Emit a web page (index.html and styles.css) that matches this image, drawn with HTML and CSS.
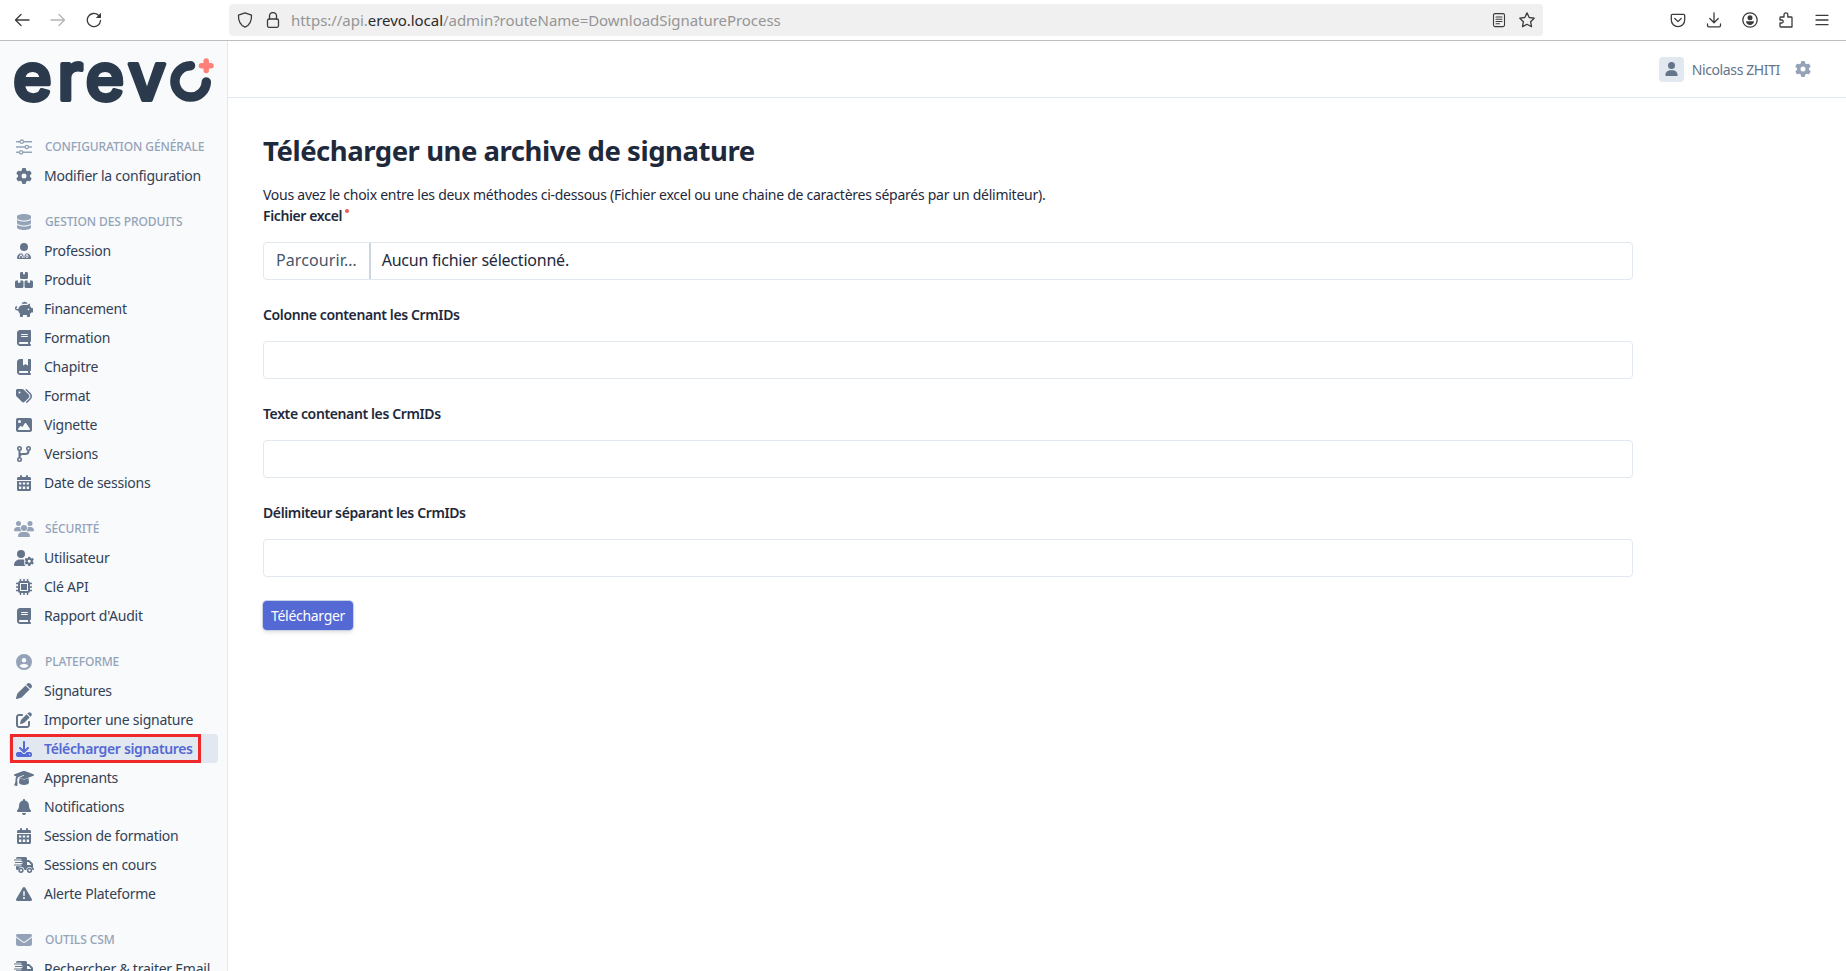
FILE: index.html
```html
<!DOCTYPE html>
<html lang="fr">
<head>
    <meta charset="UTF-8">
    <meta name="viewport" content="width=device-width, initial-scale=1.0">
    <title>Télécharger une archive de signature</title>
    <link rel="stylesheet" href="styles.css">
</head>
<body>
    <!-- icon sprite -->
    <svg class="sprite" aria-hidden="true">
        <symbol id="gear" viewBox="0 0 512 512"><path d="M495.9 166.6c3.2 8.7 .5 18.4-6.4 24.6l-43.3 39.4c1.1 8.3 1.7 16.8 1.7 25.4s-.6 17.1-1.7 25.4l43.3 39.4c6.9 6.2 9.6 15.9 6.4 24.6c-4.4 11.9-9.7 23.3-15.8 34.3l-4.7 8.1c-6.6 11-14 21.4-22.1 31.2c-5.9 7.2-15.7 9.6-24.5 6.8l-55.7-17.7c-13.4 10.3-28.2 18.9-44 25.4l-12.5 57.1c-2 9.1-9 16.3-18.2 17.8c-13.8 2.3-28 3.5-42.5 3.5s-28.7-1.2-42.5-3.5c-9.2-1.5-16.2-8.7-18.2-17.8l-12.5-57.1c-15.8-6.5-30.6-15.1-44-25.4L83.1 425.9c-8.8 2.8-18.6 .3-24.5-6.8c-8.1-9.8-15.5-20.2-22.1-31.2l-4.7-8.1c-6.1-11-11.4-22.4-15.8-34.3c-3.2-8.7-.5-18.4 6.4-24.6l43.3-39.4C64.6 273.1 64 264.6 64 256s.6-17.1 1.7-25.4L22.4 191.2c-6.9-6.2-9.6-15.9-6.4-24.6c4.4-11.9 9.7-23.3 15.8-34.3l4.7-8.1c6.6-11 14-21.4 22.1-31.2c5.9-7.2 15.7-9.6 24.5-6.8l55.7 17.7c13.4-10.3 28.2-18.9 44-25.4l12.5-57.1c2-9.1 9-16.3 18.2-17.8C227.3 1.2 241.5 0 256 0s28.7 1.2 42.5 3.5c9.2 1.5 16.2 8.7 18.2 17.8l12.5 57.1c15.8 6.5 30.6 15.1 44 25.4l55.7-17.7c8.8-2.8 18.6-.3 24.5 6.8c8.1 9.8 15.5 20.2 22.1 31.2l4.7 8.1c6.1 11 11.4 22.4 15.8 34.3zM256 336a80 80 0 1 0 0-160 80 80 0 1 0 0 160z"/></symbol>
        <symbol id="sliders" viewBox="0 0 16 16"><path d="M.5 2.7h3.2M7.8 2.7h7.7M.5 8h8.2M12.8 8h2.7M.5 13.3h2.7M7.3 13.3h8.2" fill="none" stroke="currentColor" stroke-width="1.5" stroke-linecap="round"/><g fill="none" stroke="currentColor" stroke-width="1.3"><circle cx="5.8" cy="2.7" r="1.7"/><circle cx="10.8" cy="8" r="1.7"/><circle cx="5.2" cy="13.3" r="1.7"/></g></symbol>
        <symbol id="database" viewBox="0 0 448 512"><path d="M448 80v48c0 44.2-100.3 80-224 80S0 172.2 0 128V80C0 35.8 100.3 0 224 0S448 35.8 448 80zM393.2 214.7c20.8-7.4 39.9-16.9 54.8-28.6V288c0 44.2-100.3 80-224 80S0 332.2 0 288V186.1c14.9 11.8 34 21.2 54.8 28.6C99.7 230.7 159.5 240 224 240s124.3-9.3 169.2-25.3zM0 346.1c14.9 11.8 34 21.2 54.8 28.6C99.7 390.7 159.5 400 224 400s124.3-9.3 169.2-25.3c20.8-7.4 39.9-16.9 54.8-28.6V432c0 44.2-100.3 80-224 80S0 476.2 0 432V346.1z"/></symbol>
        <symbol id="user" viewBox="0 0 448 512"><path d="M224 256A128 128 0 1 0 224 0a128 128 0 1 0 0 256zm-45.7 48C79.8 304 0 383.8 0 482.3C0 498.7 13.3 512 29.7 512H418.3c16.4 0 29.7-13.3 29.7-29.7C448 383.8 368.2 304 269.7 304H178.3z"/></symbol>
        <symbol id="doctor" viewBox="0 0 14 16"><circle cx="7" cy="4" r="4"/><path d="M4.5 9.7C1.9 10.4 0 12.6 0 15.1c0 .5.4.9.9.9h12.2c.5 0 .9-.4.9-.9 0-2.5-1.9-4.7-4.5-5.4L7 13z"/><path d="M4 10v2.4M2.6 15v-1.2a1.4 1.4 0 0 1 2.8 0V15M10 10v2M7 10.5v4.5" fill="none" stroke="#f8fafc" stroke-width=".9"/><circle cx="10" cy="13.3" r="1.2" fill="none" stroke="#f8fafc" stroke-width=".9"/></symbol>
        <symbol id="boxes" viewBox="0 0 18 16"><path d="M6.5 0H8v2.5l1-.6 1 .6V0h1.5c.8 0 1.5.7 1.5 1.5v4c0 .8-.7 1.5-1.5 1.5h-5C5.7 7 5 6.3 5 5.5v-4C5 .7 5.7 0 6.5 0zM1.5 8.5H3V11l1.2-.6 1.2.6V8.5H7c.8 0 1.5.7 1.5 1.5v4.5c0 .8-.7 1.5-1.5 1.5H1.5C.7 16 0 15.3 0 14.5V10c0-.8.7-1.5 1.5-1.5zM11 8.5h1.6V11l1.2-.6 1.2.6V8.5h1.5c.8 0 1.5.7 1.5 1.5v4.5c0 .8-.7 1.5-1.5 1.5H11c-.8 0-1.5-.7-1.5-1.5V10c0-.8.7-1.5 1.5-1.5z"/></symbol>
        <symbol id="piggy" viewBox="0 0 18 16"><path d="M6.6 3.2A3 3 0 0 1 12.5 3.1C11 2.7 8.5 2.7 6.6 3.2zM3.3 8C3.7 5.5 6 4 8.5 4h4c.8-1 1.800-1.300 2.700-1.300l-.4 2.200c.8.6 1.300 1.300 1.600 2.100h.9c.4 0 .7.3.7.7v3.200c0 .4-.3.7-.7.7h-1.100c-.3.5-.7.9-1.200 1.300V15.200c0 .5-.3.8-.8.8h-1.500c-.5 0-.8-.3-.8-.8V14H8v1.200c0 .5-.3.8-.8.8H5.700c-.5 0-.8-.3-.8-.8v-2.600C4 11.800 3.400 10.800 3.200 9.500H2.500C1 9.500 0 8.500 0 7.200 0 6 .9 5.100 2.100 5.100v1.300c-.5 0-.8.3-.8.8 0 .5.5.8 1 .8zM13.500 9.200a.8.8 0 1 0 0-1.600.8.8 0 0 0 0 1.600z" fill-rule="evenodd"/></symbol>
        <symbol id="book" viewBox="0 0 448 512"><path d="M96 0C43 0 0 43 0 96V416c0 53 43 96 96 96H384h32c17.7 0 32-14.3 32-32s-14.3-32-32-32V384c17.7 0 32-14.3 32-32V32c0-17.7-14.3-32-32-32H384 96zm0 384H352v64H96c-17.7 0-32-14.3-32-32s14.3-32 32-32zm32-240c0-8.8 7.2-16 16-16H336c8.8 0 16 7.2 16 16s-7.2 16-16 16H144c-8.8 0-16-7.2-16-16zm16 48H336c8.8 0 16 7.2 16 16s-7.2 16-16 16H144c-8.8 0-16-7.2-16-16s7.2-16 16-16z"/></symbol>
        <symbol id="bookmark" viewBox="0 0 448 512"><path d="M0 96C0 43 43 0 96 0h96V190.7c0 13.4 15.5 20.9 26 12.5L272 160l54 43.2c10.5 8.4 26 .9 26-12.5V0h32 32c17.7 0 32 14.3 32 32V352c0 17.7-14.3 32-32 32v64c17.7 0 32 14.3 32 32s-14.3 32-32 32H384 96c-53 0-96-43-96-96V96zM64 416c0 17.7 14.3 32 32 32H352V384H96c-17.7 0-32 14.3-32 32z"/></symbol>
        <symbol id="tags" viewBox="0 0 512 512"><path d="M345 39.1L472.8 168.4c52.4 53 52.4 138.2 0 191.2L360.8 472.9c-9.3 9.4-24.5 9.5-33.9 .2s-9.5-24.5-.2-33.9L438.6 325.9c33.9-34.3 33.9-89.4 0-123.7L310.9 72.9c-9.3-9.4-9.2-24.6 .2-33.9s24.6-9.2 33.9 .2zM0 229.5V80C0 53.5 21.5 32 48 32H197.5c17 0 33.3 6.7 45.3 18.7l168 168c25 25 25 65.5 0 90.5L277.3 442.7c-25 25-65.5 25-90.5 0l-168-168C6.7 262.7 0 246.5 0 229.5zM144 144a32 32 0 1 0 -64 0 32 32 0 1 0 64 0z"/></symbol>
        <symbol id="image" viewBox="0 0 512 512"><path d="M0 96C0 60.7 28.7 32 64 32H448c35.3 0 64 28.7 64 64V416c0 35.3-28.7 64-64 64H64c-35.3 0-64-28.7-64-64V96zM323.8 202.5c-4.5-6.6-11.9-10.5-19.8-10.5s-15.4 3.9-19.8 10.5l-87 127.6L170.7 297c-4.6-5.7-11.5-9-18.7-9s-14.2 3.3-18.7 9l-64 80c-5.8 7.2-6.9 17.1-2.9 25.4s12.4 13.6 21.6 13.6h96 32H424c8.9 0 17.1-4.9 21.2-12.8s3.6-17.4-1.4-24.7l-120-176zM112 192a48 48 0 1 0 0-96 48 48 0 1 0 0 96z"/></symbol>
        <symbol id="branch" viewBox="0 0 14 16"><g fill="none" stroke="currentColor" stroke-width="1.6"><circle cx="2.5" cy="2.5" r="1.7"/><circle cx="11.5" cy="2.5" r="1.7"/><circle cx="2.5" cy="13.5" r="1.7"/></g><path d="M2.5 4.5v7M11.5 4.5V5a3 3 0 0 1-3 3h-3a3 3 0 0 0-3 3" fill="none" stroke="currentColor" stroke-width="2"/></symbol>
        <symbol id="calendar" viewBox="0 0 14 16"><path fill-rule="evenodd" d="M3 1a1 1 0 0 1 2 0v1h4V1a1 1 0 0 1 2 0v1h1.5c.8 0 1.5.7 1.5 1.5V5H0V3.5C0 2.7.7 2 1.5 2H3zM0 6h14v8.5c0 .8-.7 1.5-1.5 1.5h-11C.7 16 0 15.3 0 14.5zM2 7.5V9.500h2.300V7.500zM5.800 7.500V9.500h2.400V7.500zM9.700 7.500V9.500H12V7.500zM2 11.500v2.500h2.300v-2.500zM5.800 11.500v2.500h2.400v-2.500zM9.700 11.500v2.500H12v-2.500z"/></symbol>
        <symbol id="group" viewBox="0 0 20 16"><circle cx="4.5" cy="2.5" r="2.5"/><circle cx="16" cy="2.5" r="2.5"/><circle cx="10" cy="7" r="3"/><path d="M3.3 6h1.5c.5 0 1 .1 1.5.3-.2 1.5.3 3 1.4 3.9H.7c-.4 0-.7-.3-.7-.7C0 7.500 1.500 6 3.300 6zM15.200 6h1.500C18.500 6 20 7.500 20 9.500c0 .4-.3.7-.7.7h-7c1.100-.9 1.600-2.400 1.400-3.900.5-.2 1-.3 1.500-.3zM4 15.200C4 12.900 5.900 11 8.200 11h3.600c2.300 0 4.200 1.900 4.200 4.200 0 .5-.4.8-.8.8H4.800c-.4 0-.8-.3-.8-.8z"/></symbol>
        <symbol id="user-gear" viewBox="0 0 20 16"><circle cx="7" cy="4" r="4"/><path d="M5.6 9.5h2.8c.8 0 1.5.1 2.2.4-.8 1.2-.6 1.600-.2 2.300-.7 1.200.1 3 1.200 3.800H.9c-.5 0-.9-.4-.9-.9C0 12 2.500 9.500 5.600 9.500z"/><svg x="10.5" y="6.5" width="9.5" height="9.5"><use href="#gear"/></svg></symbol>
        <symbol id="chip" viewBox="0 0 16 16"><path d="M4.5 0v16M8 0v16M11.5 0v16M0 4.5h16M0 8h16M0 11.5h16" stroke="currentColor" stroke-width="1.5"/><rect x="2" y="2" width="12" height="12" rx="2"/><rect x="4.5" y="4.5" width="7" height="7" fill="none" stroke="#f8fafc"/></symbol>
        <symbol id="circle-user" viewBox="0 0 512 512"><path d="M399 384.2C376.9 345.8 335.4 320 288 320H224c-47.4 0-88.9 25.8-111 64.2c35.2 39.2 86.2 63.8 143 63.8s107.8-24.7 143-63.8zM0 256a256 256 0 1 1 512 0A256 256 0 1 1 0 256zm256 16a72 72 0 1 0 0-144 72 72 0 1 0 0 144z"/></symbol>
        <symbol id="pen" viewBox="0 0 512 512"><path d="M362.7 19.3L328 54 458 184l34.7-34.7c25-25 25-65.5 0-90.5L453.3 19.3c-25-25-65.5-25-90.5 0zM305 77L58.6 323.5c-10.4 10.4-18 23.3-22.2 37.4L1 481.2C-1.5 489.7 .8 498.8 7 505s15.3 8.5 23.7 6.1l120.3-35.4c14.1-4.2 27-11.8 37.4-22.2L435 207z"/></symbol>
        <symbol id="edit" viewBox="0 0 512 512"><path d="M471.6 21.7c-21.9-21.9-57.3-21.9-79.2 0L362.3 51.7l97.9 97.9 30.1-30.1c21.9-21.9 21.9-57.3 0-79.2L471.6 21.7zm-299.2 220c-6.1 6.1-10.8 13.6-13.5 21.9l-29.6 88.8c-2.9 8.6-.6 18.1 5.8 24.6s15.9 8.7 24.6 5.8l88.8-29.6c8.2-2.7 15.7-7.4 21.9-13.5L437.7 172.3 339.7 74.3 172.4 241.7zM96 64C43 64 0 107 0 160V416c0 53 43 96 96 96H352c53 0 96-43 96-96V320c0-17.7-14.3-32-32-32s-32 14.3-32 32v96c0 17.7-14.3 32-32 32H96c-17.7 0-32-14.3-32-32V160c0-17.7 14.3-32 32-32h96c17.7 0 32-14.3 32-32s-14.3-32-32-32H96z"/></symbol>
        <symbol id="download" viewBox="0 0 512 512"><path d="M288 32c0-17.7-14.3-32-32-32s-32 14.3-32 32V274.7l-73.4-73.4c-12.5-12.5-32.8-12.5-45.3 0s-12.5 32.8 0 45.3l128 128c12.5 12.5 32.8 12.5 45.3 0l128-128c12.5-12.5 12.5-32.8 0-45.3s-32.8-12.5-45.3 0L288 274.7V32zM64 352c-35.3 0-64 28.7-64 64v32c0 35.3 28.7 64 64 64H448c35.3 0 64-28.7 64-64V416c0-35.3-28.7-64-64-64H346.5l-45.3 45.3c-25 25-65.5 25-90.5 0L165.5 352H64zm368 56a24 24 0 1 1 0 48 24 24 0 1 1 0-48z"/></symbol>
        <symbol id="graduate" viewBox="0 0 20 16"><path d="M10 1c-.3 0-.5 0-.8.1L.5 4.3C.2 4.400 0 4.700 0 5s.2.6.5.7l1.900.7C1.800 7.300 1.500 8.400 1.500 9.500v1c0 1.500-.5 3-1.200 4.200-.2.3 0 .8.4.9l2 .4c.3.1.5-.1.6-.4.4-2 .2-3.800-.1-5.100C3.200 9 3.700 7.800 4.600 7l5-2 .3.7-4.500 1.900 3.800 1.400c.5.2 1.100.2 1.600 0l8.700-3.300c.3-.1.5-.4.5-.7s-.2-.6-.5-.7l-8.700-3.200C10.500 1 10.300 1 10 1zM5 12.500C5 13.900 7.200 15 10 15s5-1.100 5-2.500l-.5-4.500-3.400 1.200c-.7.3-1.500.3-2.200 0L5.500 8z"/></symbol>
        <symbol id="bell" viewBox="0 0 448 512"><path d="M224 0c-17.7 0-32 14.3-32 32V51.2C119 66 64 130.6 64 208v18.8c0 47-17.3 92.4-48.5 127.6l-7.4 8.3c-8.4 9.4-10.4 22.9-5.3 34.4S19.4 416 32 416H416c12.6 0 24-7.4 29.2-18.9s3.1-25-5.3-34.4l-7.4-8.3C401.3 319.2 384 273.9 384 226.8V208c0-77.4-55-142-128-156.8V32c0-17.7-14.3-32-32-32zm45.3 493.3c12-12 18.7-28.3 18.7-45.3H224 160c0 17 6.7 33.3 18.7 45.3s28.3 18.7 45.3 18.7s33.3-6.7 45.3-18.7z"/></symbol>
        <symbol id="truck" viewBox="0 0 20 16"><path fill-rule="evenodd" d="M3.5 0H11.5C12.3 0 13 .7 13 1.5V3h1.600c.4 0 .8.2 1.100.4l2.900 2.900c.3.3.4.7.4 1.100V11c.6 0 1 .4 1 1s-.4 1-1 1h-.6c0-1.700-1.300-3-3-3s-3 1.300-3 3h-2c0-1.700-1.300-3-3-3s-3 1.300-3 3H3.500C2.700 13 2 12.300 2 11.500V1.500C2 .7 2.700 0 3.500 0zM13 5v3h4v-.6L14.600 5z"/><path d="M0 3h7.500M1 5.500h7.500M0 8h7.500" stroke="#f8fafc" stroke-width="2.600"/><path d="M0 3h8M1 5.500h7.500M0 8h8" stroke="currentColor" stroke-width="1.100"/><g fill="none" stroke="currentColor" stroke-width="1.5"><circle cx="7" cy="13.3" r="1.9"/><circle cx="15.5" cy="13.3" r="1.9"/></g></symbol>
        <symbol id="alert" viewBox="0 0 512 512"><path d="M256 32c14.2 0 27.3 7.5 34.5 19.8l216 368c7.3 12.4 7.3 27.7 .2 40.1S486.3 480 472 480H40c-14.3 0-27.6-7.7-34.7-20.1s-7-27.8 .2-40.1l216-368C228.7 39.5 241.8 32 256 32zm0 128c-13.3 0-24 10.7-24 24V296c0 13.3 10.7 24 24 24s24-10.7 24-24V184c0-13.3-10.7-24-24-24zm32 224a32 32 0 1 0 -64 0 32 32 0 1 0 64 0z"/></symbol>
        <symbol id="envelope" viewBox="0 0 512 512"><path d="M48 64C21.5 64 0 85.5 0 112c0 15.1 7.1 29.3 19.2 38.4L236.8 313.6c11.4 8.5 27 8.5 38.4 0L492.8 150.4c12.1-9.1 19.2-23.3 19.2-38.4c0-26.5-21.5-48-48-48H48zM0 176V384c0 35.3 28.7 64 64 64H448c35.3 0 64-28.7 64-64V176L294.4 339.2c-22.8 17.1-54 17.1-76.8 0L0 176z"/></symbol>
    </svg>

    <div class="browser-bar">
        <div class="nav-buttons">
            <svg width="16" height="16" viewBox="0 0 16 16"><path d="M15 8H1.5M7 2.5L1.5 8 7 13.5"/></svg>
            <svg class="disabled" width="16" height="16" viewBox="0 0 16 16"><path d="M1 8h13.5M9 2.5L14.5 8 9 13.5"/></svg>
            <svg width="16" height="16" viewBox="0 0 16 16"><path d="M14.5 8.5A6.6 6.6 0 1 1 12.5 3.3"/><path class="solid" d="M15 .8V6H9.8z"/></svg>
        </div>
        <div class="url-bar">
            <svg width="16" height="16" viewBox="0 0 16 16"><path d="M8 .8l6.5 2.3c.3 5-1.5 9.8-6.5 12.1C3 12.9 1.2 8.1 1.5 3.1z"/></svg>
            <svg class="lock" width="16" height="16" viewBox="0 0 16 16"><rect x="2.5" y="7" width="11" height="8.3" rx="1.5"/><path d="M4.5 7V4a3.5 3.5 0 0 1 7 0v3"/></svg>
            <span class="url">https://api.<b>erevo.local</b>/admin?routeName=DownloadSignatureProcess</span>
            <svg class="reader" width="16" height="16" viewBox="0 0 16 16"><rect x="2.5" y="1.6" width="11" height="13" rx="1.5"/><path d="M5 5h6M5 7.3h6M5 9.5h6M5 11.7h3.5"/></svg>
            <svg width="16" height="16" viewBox="0 0 16 16"><path d="M8 .9l2.2 4.6 5 .7-3.6 3.5.9 5L8 12.3l-4.5 2.4.9-5L.8 6.2l5-.7z"/></svg>
        </div>
        <div class="tool-buttons">
            <svg width="16" height="16" viewBox="0 0 16 16"><path d="M2.5 2.3h11c.7 0 1.2.5 1.2 1.2V8a6.7 6.7 0 0 1-13.4 0V3.5c0-.7.5-1.2 1.2-1.2zM4.8 6.5L8 9.6l3.2-3.1"/></svg>
            <svg width="16" height="16" viewBox="0 0 16 16"><path d="M8 .8V10.5M3.8 6.5L8 10.7l4.2-4.2M1.5 12v1.5c0 .8.6 1.4 1.4 1.4h10.2c.8 0 1.4-.6 1.4-1.4V12"/></svg>
            <svg width="16" height="16" viewBox="0 0 16 16"><circle cx="8" cy="8" r="7.2"/><circle class="solid" cx="8" cy="5.7" r="2.5"/><path class="solid" d="M4 9.2h8c0 2-1.7 3.7-4 3.7s-4-1.7-4-3.7z"/></svg>
            <svg width="16" height="16" viewBox="0 0 16 16"><path d="M6 5V2.8a1.9 1.9 0 0 1 3.8 0V5h3.4c.5 0 .8.3.8.8V15H2.8c-.5 0-.8-.3-.8-.8V11h1.7a1.5 1.5 0 0 0 0-3H2V5.8c0-.5.3-.8.8-.8z"/></svg>
            <svg width="16" height="16" viewBox="0 0 16 16"><path d="M2 3.3h12M2 8h12M2 12.7h12"/></svg>
        </div>
    </div>

    <div class="wrapper">
        <aside class="sidebar">
            <svg class="logo" width="204" height="56" viewBox="0 0 204 56" role="img" aria-label="erevo">
                <text class="logo-text" y="47.5" x="1 45.5 73.5 116">erev</text>
                <path class="logo-ring" d="M178.5 13.7A15.7 15.7 0 1 0 194.3 30"/>
                <path class="logo-plus" d="M194.2 9v9.500M189.500 13.700h9.500"/>
            </svg>
            <ul class="menu">
                <li class="menu-header"><svg class="icon" width="16"><use href="#sliders"/></svg><span>CONFIGURATION GÉNÉRALE</span></li>
                <li><svg class="icon" width="16"><use href="#gear"/></svg><span>Modifier la configuration</span></li>

                <li class="menu-header"><svg class="icon" width="14"><use href="#database"/></svg><span>GESTION DES PRODUITS</span></li>
                <li><svg class="icon" width="14"><use href="#doctor"/></svg><span>Profession</span></li>
                <li><svg class="icon" width="18"><use href="#boxes"/></svg><span>Produit</span></li>
                <li><svg class="icon" width="18"><use href="#piggy"/></svg><span>Financement</span></li>
                <li><svg class="icon" width="14"><use href="#book"/></svg><span>Formation</span></li>
                <li><svg class="icon" width="14"><use href="#bookmark"/></svg><span>Chapitre</span></li>
                <li><svg class="icon" width="16"><use href="#tags"/></svg><span>Format</span></li>
                <li><svg class="icon" width="16"><use href="#image"/></svg><span>Vignette</span></li>
                <li><svg class="icon" width="14"><use href="#branch"/></svg><span>Versions</span></li>
                <li><svg class="icon" width="14"><use href="#calendar"/></svg><span>Date de sessions</span></li>

                <li class="menu-header"><svg class="icon" width="20"><use href="#group"/></svg><span>SÉCURITÉ</span></li>
                <li><svg class="icon" width="20"><use href="#user-gear"/></svg><span>Utilisateur</span></li>
                <li><svg class="icon" width="16"><use href="#chip"/></svg><span>Clé API</span></li>
                <li><svg class="icon" width="14"><use href="#book"/></svg><span>Rapport d'Audit</span></li>

                <li class="menu-header"><svg class="icon" width="16"><use href="#circle-user"/></svg><span>PLATEFORME</span></li>
                <li><svg class="icon" width="16"><use href="#pen"/></svg><span>Signatures</span></li>
                <li><svg class="icon" width="16"><use href="#edit"/></svg><span>Importer une signature</span></li>
                <li class="active"><svg class="icon" width="16"><use href="#download"/></svg><span>Télécharger signatures</span></li>
                <li><svg class="icon" width="20"><use href="#graduate"/></svg><span>Apprenants</span></li>
                <li><svg class="icon" width="14"><use href="#bell"/></svg><span>Notifications</span></li>
                <li><svg class="icon" width="14"><use href="#calendar"/></svg><span>Session de formation</span></li>
                <li><svg class="icon" width="20"><use href="#truck"/></svg><span>Sessions en cours</span></li>
                <li><svg class="icon" width="16"><use href="#alert"/></svg><span>Alerte Plateforme</span></li>

                <li class="menu-header"><svg class="icon" width="16"><use href="#envelope"/></svg><span>OUTILS CSM</span></li>
                <li><svg class="icon" width="20"><use href="#truck"/></svg><span>Rechercher &amp; traiter Email</span></li>
            </ul>
        </aside>

        <div class="content">
            <header class="topbar">
                <span class="avatar"><svg width="13" height="14"><use href="#user"/></svg></span>
                <span class="username">Nicolass ZHITI</span>
                <svg class="settings" width="16" height="16"><use href="#gear"/></svg>
            </header>

            <main>
                <h1>Télécharger une archive de signature</h1>
                <p class="intro">Vous avez le choix entre les deux méthodes ci-dessous (Fichier excel ou une chaine de caractères séparés par un délimiteur).</p>
                <form>
                    <div class="form-group">
                        <label class="required">Fichier excel</label>
                        <div class="file-input">
                            <span class="file-button">Parcourir…</span>
                            <span class="file-name">Aucun fichier sélectionné.</span>
                        </div>
                    </div>
                    <div class="form-group">
                        <label for="column">Colonne contenant les CrmIDs</label>
                        <input type="text" id="column">
                    </div>
                    <div class="form-group">
                        <label for="text">Texte contenant les CrmIDs</label>
                        <input type="text" id="text">
                    </div>
                    <div class="form-group">
                        <label for="delimiter">Délimiteur séparant les CrmIDs</label>
                        <input type="text" id="delimiter">
                    </div>
                    <button type="button" class="btn">Télécharger</button>
                </form>
            </main>
        </div>
    </div>
</body>
</html>
```
FILE: styles.css
```css
* { box-sizing: border-box; margin: 0; padding: 0; }
body { height: 971px; overflow: hidden; display: flex; flex-direction: column; font-family: "Noto Sans", sans-serif; font-size: 14px; color: #1e293b; background: #fff; }
.sprite { display: none; }

/* Browser toolbar */
.browser-bar { height: 41px; flex: none; display: flex; align-items: center; border-bottom: 1px solid #bebebe; }
.browser-bar svg { flex: none; fill: none; stroke: #3b3b3b; stroke-width: 1.3; stroke-linecap: round; stroke-linejoin: round; }
.browser-bar .solid { fill: #3b3b3b; stroke: none; }
.browser-bar .disabled { stroke: #b5b5b5; }
.nav-buttons { width: 229px; display: flex; gap: 20px; padding-left: 14px; }
.url-bar { width: 1314px; height: 32px; display: flex; align-items: center; padding: 0 8px; border-radius: 4px; background: #f0f0f0; }
.lock { margin-left: 12px; }
.url { flex: 1; margin-left: 10px; font-size: 15px; letter-spacing: -0.04px; color: #959595; white-space: nowrap; }
.url b { font-weight: 400; color: #2b2b2b; }
.url-bar .reader { margin-right: 12px; stroke-width: 1.1; }
.tool-buttons { display: flex; gap: 20px; margin-left: 127px; }

.wrapper { flex: 1; min-height: 0; display: flex; }

/* Sidebar */
.sidebar { width: 228px; flex: none; padding: 11px 9px 0; overflow: hidden; background: #f8fafc; border-right: 1px solid #e2e8f0; }
.logo { display: block; margin-left: 3px; overflow: visible; }
.logo-text { font-family: Inter, sans-serif; font-size: 66px; font-weight: 500; fill: #2b3a4c; stroke: #2b3a4c; stroke-width: 4px; stroke-linejoin: round; }
.logo-ring { fill: none; stroke: #2b3a4c; stroke-width: 9.5; stroke-linecap: round; }
.logo-plus { fill: none; stroke: #ff8078; stroke-width: 5.5; stroke-linecap: round; }
.menu { list-style: none; margin-top: 24px; }
.menu li { height: 29px; display: flex; align-items: center; border-radius: 4px; color: #334155; letter-spacing: -0.24px; white-space: nowrap; }
.menu .icon { height: 16px; flex: none; color: #64748b; fill: currentColor; }
.icon[width="14"] { margin: 0 13px 0 8px; }
.icon[width="16"] { margin: 0 12px 0 7px; }
.icon[width="18"] { margin: 0 11px 0 6px; }
.icon[width="20"] { margin: 0 10px 0 5px; }
.menu .menu-header { margin-top: 17px; font-size: 12px; font-weight: 500; letter-spacing: -0.1px; color: #94a3b8; }
.menu .menu-header:first-child { margin-top: 0; }
.menu-header span { padding-left: 1px; }
.menu .menu-header .icon { margin-top: 1px; color: #94a3b8; }
.menu .active { position: relative; background: #e2e8f0; color: #5469d4; font-weight: 600; letter-spacing: -0.35px; }
.menu .active .icon { color: #5469d4; }
.active::after { content: ""; box-sizing: border-box; position: absolute; top: 0; left: 1px; width: 191px; height: 29px; border: 3px solid #ef2929; }

/* Page */
.content { flex: 1; }
.topbar { height: 57px; display: flex; align-items: center; justify-content: flex-end; padding-right: 35px; border-bottom: 1px solid #e2e8f0; }
.avatar { width: 25px; height: 25px; display: flex; align-items: center; justify-content: center; border-radius: 4px; background: #e2e8f0; fill: #64748b; }
.username { margin: 0 15px 0 8px; color: #64748b; letter-spacing: -0.38px; }
.settings { fill: #94a3b8; }
main { width: 1405px; padding: 34px 0 0 35px; }
h1 { font-size: 27.5px; line-height: 38px; font-weight: 700; letter-spacing: -0.47px; }
.intro { margin-top: 14px; line-height: 21px; letter-spacing: -0.26px; }
label { display: block; line-height: 21px; margin-bottom: 16px; font-weight: 600; letter-spacing: -0.38px; }
.required::after { content: ""; display: inline-block; width: 4px; height: 4px; margin-left: 3px; border-radius: 50%; background: #e85b5b; vertical-align: 8px; }
.form-group { margin-bottom: 24px; }
input, .file-input { display: flex; width: 100%; height: 38px; border: 1px solid #e2e8f0; border-radius: 4px; }
.file-input { font-size: 16px; line-height: 34px; }
.file-button { padding: 0 12px; border-right: 2px solid #cbd5e1; color: #475569; letter-spacing: 0.1px; }
.file-name { padding-left: 11px; letter-spacing: -0.22px; }
.btn { display: block; height: 29px; padding: 0 8px; border: 0; border-radius: 4px; background: #5469d4; color: #fff; font: 14px "Noto Sans", sans-serif; letter-spacing: -0.3px; box-shadow: 0 0 0 1px #c9d3e6, 0 2px 4px rgba(0, 0, 0, 0.15); }
```
